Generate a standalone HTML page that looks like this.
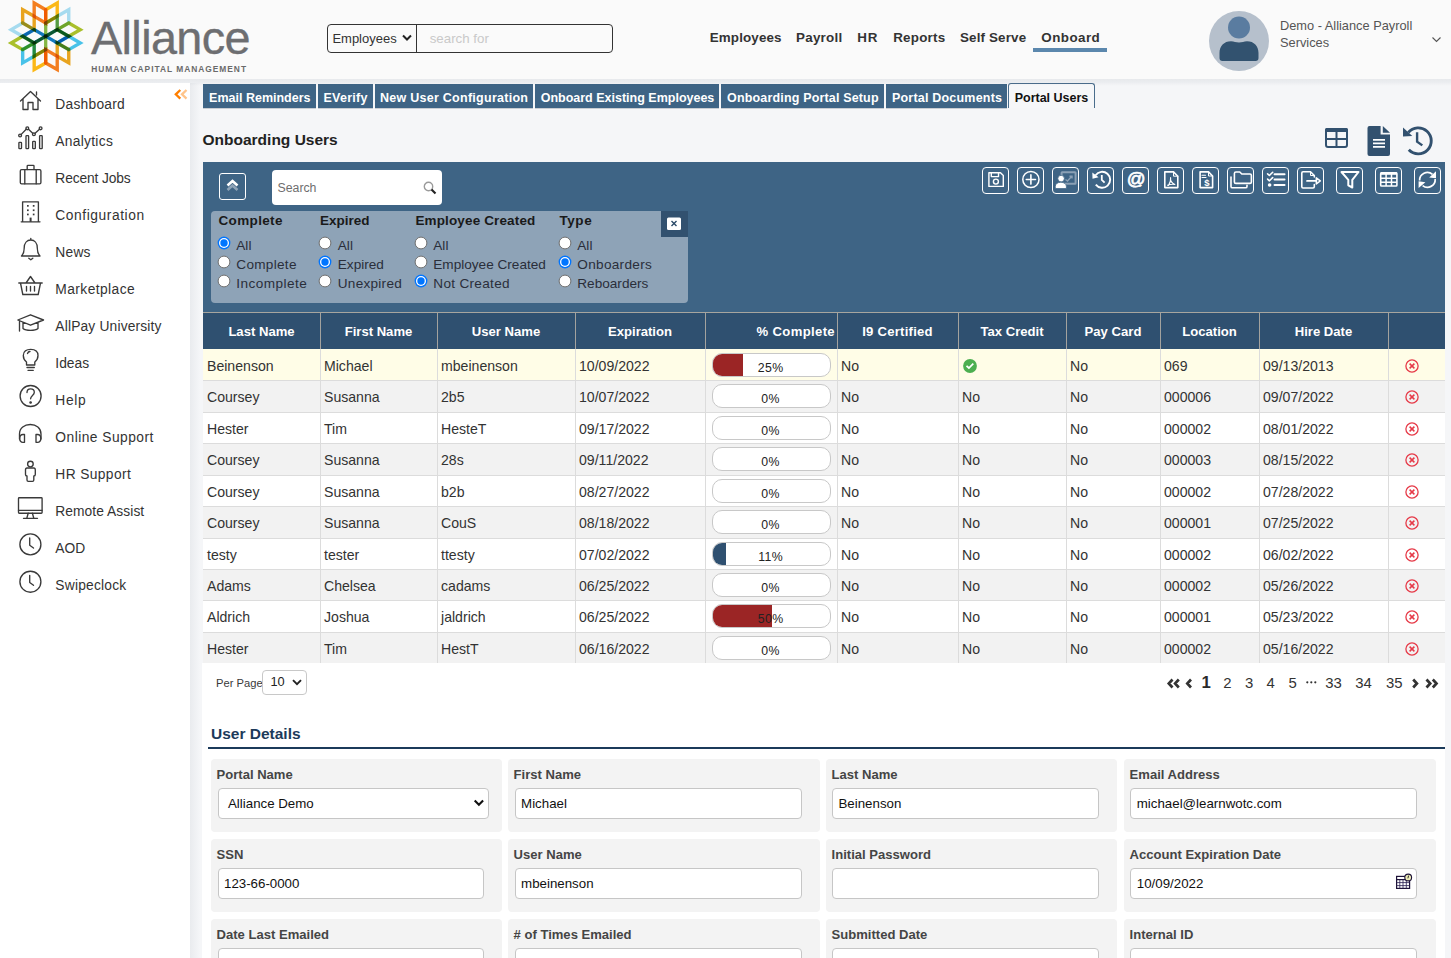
<!DOCTYPE html>
<html><head><meta charset="utf-8"><title>Portal Users</title>
<style>
html,body{margin:0;padding:0;}
body{width:1451px;height:958px;overflow:hidden;position:relative;background:#f5f6f8;font-family:"Liberation Sans", sans-serif;}
.t{position:absolute;line-height:1;white-space:nowrap;}
.r{position:absolute;box-sizing:border-box;}
svg{position:absolute;overflow:visible;}
</style></head><body>
<div class="r" style="left:0px;top:0px;width:1451px;height:79px;background:#fafafa;"></div>
<svg style="left:0;top:0;isolation:isolate" width="95" height="79" viewBox="0 0 95 79"><path d="M45.70 23.00 L45.70 9.70 L57.22 3.05 L57.22 16.35 Z" fill="none" stroke="#fbb817" stroke-width="3.4" stroke-linejoin="miter" stroke-miterlimit="3" style="mix-blend-mode:multiply"/><path d="M45.70 23.00 L45.70 9.70 L34.18 3.05 L34.18 16.35 Z" fill="none" stroke="#f37e20" stroke-width="3.4" stroke-linejoin="miter" stroke-miterlimit="3" style="mix-blend-mode:multiply"/><path d="M57.22 29.65 L68.74 23.00 L80.25 29.65 L68.74 36.30 Z" fill="none" stroke="#a9bf2b" stroke-width="3.4" stroke-linejoin="miter" stroke-miterlimit="3" style="mix-blend-mode:multiply"/><path d="M57.22 29.65 L68.74 23.00 L68.74 9.70 L57.22 16.35 Z" fill="none" stroke="#a6dbef" stroke-width="3.4" stroke-linejoin="miter" stroke-miterlimit="3" style="mix-blend-mode:multiply"/><path d="M57.22 42.95 L68.74 49.60 L68.74 62.90 L57.22 56.25 Z" fill="none" stroke="#e8a41f" stroke-width="3.4" stroke-linejoin="miter" stroke-miterlimit="3" style="mix-blend-mode:multiply"/><path d="M57.22 42.95 L68.74 49.60 L80.25 42.95 L68.74 36.30 Z" fill="none" stroke="#48c2e9" stroke-width="3.4" stroke-linejoin="miter" stroke-miterlimit="3" style="mix-blend-mode:multiply"/><path d="M45.70 49.60 L45.70 62.90 L34.18 69.55 L34.18 56.25 Z" fill="none" stroke="#fbb817" stroke-width="3.4" stroke-linejoin="miter" stroke-miterlimit="3" style="mix-blend-mode:multiply"/><path d="M45.70 49.60 L45.70 62.90 L57.22 69.55 L57.22 56.25 Z" fill="none" stroke="#f37e20" stroke-width="3.4" stroke-linejoin="miter" stroke-miterlimit="3" style="mix-blend-mode:multiply"/><path d="M34.18 42.95 L22.66 49.60 L11.15 42.95 L22.66 36.30 Z" fill="none" stroke="#a9bf2b" stroke-width="3.4" stroke-linejoin="miter" stroke-miterlimit="3" style="mix-blend-mode:multiply"/><path d="M34.18 42.95 L22.66 49.60 L22.66 62.90 L34.18 56.25 Z" fill="none" stroke="#48c2e9" stroke-width="3.4" stroke-linejoin="miter" stroke-miterlimit="3" style="mix-blend-mode:multiply"/><path d="M34.18 29.65 L22.66 23.00 L22.66 9.70 L34.18 16.35 Z" fill="none" stroke="#e8a41f" stroke-width="3.4" stroke-linejoin="miter" stroke-miterlimit="3" style="mix-blend-mode:multiply"/><path d="M34.18 29.65 L22.66 23.00 L11.15 29.65 L22.66 36.30 Z" fill="none" stroke="#a6dbef" stroke-width="3.4" stroke-linejoin="miter" stroke-miterlimit="3" style="mix-blend-mode:multiply"/><path d="M45.70 36.30 L45.70 23.00 L57.22 16.35 L57.22 29.65 Z" fill="none" stroke="#84b644" stroke-width="3.3" stroke-linejoin="miter" stroke-miterlimit="3" style="mix-blend-mode:multiply"/><path d="M45.70 36.30 L45.70 49.60 L34.18 56.25 L34.18 42.95 Z" fill="none" stroke="#84b644" stroke-width="3.3" stroke-linejoin="miter" stroke-miterlimit="3" style="mix-blend-mode:multiply"/><path d="M45.70 36.30 L57.22 29.65 L68.74 36.30 L57.22 42.95 Z" fill="none" stroke="#1279bd" stroke-width="3.3" stroke-linejoin="miter" stroke-miterlimit="3" style="mix-blend-mode:multiply"/><path d="M45.70 36.30 L34.18 42.95 L22.66 36.30 L34.18 29.65 Z" fill="none" stroke="#1279bd" stroke-width="3.3" stroke-linejoin="miter" stroke-miterlimit="3" style="mix-blend-mode:multiply"/></svg>
<div class="t" style="left:91.0px;top:14.6px;font-size:46.8px;color:#6d6e71;font-weight:normal;letter-spacing:-0.62px;-webkit-text-stroke:0.35px #6d6e71;">Alliance</div>
<div class="t" style="left:91.2px;top:65.2px;font-size:8.4px;color:#6a6a6a;font-weight:bold;letter-spacing:0.98px;">HUMAN CAPITAL MANAGEMENT</div>
<div class="r" style="left:327px;top:24px;width:286px;height:29px;border:1px solid #333;border-radius:4px;background:#fafafa;"></div>
<div class="r" style="left:416px;top:24px;width:1px;height:29px;background:#333;"></div>
<div class="t" style="left:332.4px;top:31.9px;font-size:13px;color:#333;font-weight:normal;">Employees</div>
<svg style="left:402px;top:34px" width="10" height="8" viewBox="0 0 10 8"><path d="M1 1.5 L5 5.5 L9 1.5" fill="none" stroke="#222" stroke-width="2"/></svg>
<div class="t" style="left:429.7px;top:31.6px;font-size:13.3px;color:#c9c9c9;font-weight:normal;">search for</div>
<div class="t" style="left:709.8px;top:31.4px;font-size:13.4px;color:#333;font-weight:bold;letter-spacing:0.12px;">Employees</div>
<div class="t" style="left:796.0px;top:31.4px;font-size:13.4px;color:#333;font-weight:bold;letter-spacing:0.25px;">Payroll</div>
<div class="t" style="left:857.2px;top:31.4px;font-size:13.4px;color:#333;font-weight:bold;letter-spacing:1.0px;">HR</div>
<div class="t" style="left:893.2px;top:31.4px;font-size:13.4px;color:#333;font-weight:bold;letter-spacing:0.23px;">Reports</div>
<div class="t" style="left:960.0px;top:31.4px;font-size:13.4px;color:#333;font-weight:bold;letter-spacing:0.15px;">Self Serve</div>
<div class="t" style="left:1041.3px;top:31.4px;font-size:13.4px;color:#333;font-weight:bold;letter-spacing:0.45px;">Onboard</div>
<div class="r" style="left:1033px;top:48px;width:74px;height:4px;background:#5b87ad;"></div>
<svg style="left:1209px;top:11px" width="60" height="60" viewBox="0 0 60 60">
<circle cx="30" cy="30" r="30" fill="#b6c0cc"/>
<circle cx="30" cy="16.5" r="11" fill="#5a7ca0"/>
<path d="M10.5 50 L10.5 42 C10.5 35 15 30.2 22 30.2 C25 30.2 27 31.5 30 31.5 C33 31.5 35 30.2 38 30.2 C45 30.2 49.5 35 49.5 42 L49.5 47 Q49.5 50 46.5 50 L13.5 50 Q10.5 50 10.5 47 Z" fill="#32526f"/>
</svg>
<div class="t" style="left:1280.0px;top:20.2px;font-size:12.8px;color:#555;font-weight:normal;">Demo - Alliance Payroll</div>
<div class="t" style="left:1280.0px;top:37.0px;font-size:12.8px;color:#555;font-weight:normal;">Services</div>
<svg style="left:1432px;top:37px" width="9" height="5" viewBox="0 0 9 5"><path d="M0.5 0.5 L4.5 4.5 L8.5 0.5" fill="none" stroke="#555" stroke-width="1.1"/></svg>
<div class="r" style="left:0px;top:83px;width:190px;height:875px;background:#fff;"></div>
<div class="r" style="left:190px;top:79px;width:10px;height:879px;background:linear-gradient(90deg,#e9ebee,#f5f6f8);"></div>
<svg style="left:174px;top:89px" width="15" height="11" viewBox="0 0 15 11"><path d="M6.3 1 L1.8 5.3 L6.3 9.6" fill="none" stroke="#ff7f00" stroke-width="2.3"/><path d="M12.5 1 L8 5.3 L12.5 9.6" fill="none" stroke="#ffc48a" stroke-width="2.3"/></svg>
<div class="t" style="left:55.3px;top:98.1px;font-size:13.8px;color:#333;font-weight:normal;letter-spacing:0.250px;">Dashboard</div>
<div class="t" style="left:55.3px;top:135.1px;font-size:13.8px;color:#333;font-weight:normal;letter-spacing:0.287px;">Analytics</div>
<div class="t" style="left:55.3px;top:172.1px;font-size:13.8px;color:#333;font-weight:normal;letter-spacing:-0.130px;">Recent Jobs</div>
<div class="t" style="left:55.3px;top:209.1px;font-size:13.8px;color:#333;font-weight:normal;letter-spacing:0.558px;">Configuration</div>
<div class="t" style="left:55.3px;top:246.1px;font-size:13.8px;color:#333;font-weight:normal;letter-spacing:0.233px;">News</div>
<div class="t" style="left:55.3px;top:283.1px;font-size:13.8px;color:#333;font-weight:normal;letter-spacing:0.420px;">Marketplace</div>
<div class="t" style="left:55.3px;top:320.1px;font-size:13.8px;color:#333;font-weight:normal;letter-spacing:0.169px;">AllPay University</div>
<div class="t" style="left:55.3px;top:357.1px;font-size:13.8px;color:#333;font-weight:normal;letter-spacing:0.025px;">Ideas</div>
<div class="t" style="left:55.3px;top:394.1px;font-size:13.8px;color:#333;font-weight:normal;letter-spacing:0.700px;">Help</div>
<div class="t" style="left:55.3px;top:431.1px;font-size:13.8px;color:#333;font-weight:normal;letter-spacing:0.462px;">Online Support</div>
<div class="t" style="left:55.3px;top:468.1px;font-size:13.8px;color:#333;font-weight:normal;letter-spacing:0.378px;">HR Support</div>
<div class="t" style="left:55.3px;top:505.1px;font-size:13.8px;color:#333;font-weight:normal;letter-spacing:0.058px;">Remote Assist</div>
<div class="t" style="left:55.3px;top:542.1px;font-size:13.8px;color:#333;font-weight:normal;letter-spacing:0.050px;">AOD</div>
<div class="t" style="left:55.3px;top:579.1px;font-size:13.8px;color:#333;font-weight:normal;letter-spacing:0.211px;">Swipeclock</div>
<svg style="left:0;top:0" width="50" height="600" viewBox="0 0 50 600">
<g fill="none" stroke="#3a3a3a" stroke-width="1.35" stroke-linecap="round" stroke-linejoin="round">
<!-- house -->
<path d="M20.5 101 L30.5 91.5 L40.5 101 M23 99 L23 109.5 L28 109.5 L28 102.5 L33 102.5 L33 109.5 L38 109.5 L38 99 M36.5 95 L36.5 92"/>
<!-- analytics -->
<path d="M21 134.6 L26.2 129.2 M28.5 129.2 L32.7 133.3 M35.1 133.3 L39.5 129.2"/>
<circle cx="20.1" cy="135.5" r="1.4"/><circle cx="27.3" cy="128.3" r="1.4"/><circle cx="33.9" cy="134.2" r="1.4"/><circle cx="40.6" cy="128.3" r="1.4"/>
<rect x="18.9" y="142.3" width="2.6" height="6.3" rx="0.6"/><rect x="26" y="135.6" width="2.6" height="13" rx="0.6"/><rect x="32.7" y="141.3" width="2.6" height="7.3" rx="0.6"/><rect x="39.6" y="135.6" width="2.6" height="13" rx="0.6"/>
<!-- briefcase -->
<rect x="20.3" y="169.6" width="20.6" height="14.2" rx="1.3"/>
<path d="M27.2 169.6 L27.2 166 Q27.2 165.3 28 165.3 L33.3 165.3 Q34 165.3 34 166 L34 169.6 M24.8 169.6 L24.8 183.8 M36.2 169.6 L36.2 183.8"/>
<!-- building -->
<path d="M22.6 221.8 L22.6 201.8 L38.4 201.8 L38.4 221.8 M21.2 221.8 L40 221.8"/>
<g fill="#3a3a3a" stroke="none"><rect x="27" y="205" width="1.7" height="1.7"/><rect x="32.8" y="205" width="1.7" height="1.7"/><rect x="27" y="209.4" width="1.7" height="1.7"/><rect x="32.8" y="209.4" width="1.7" height="1.7"/><rect x="27" y="213.6" width="1.7" height="1.7"/><rect x="32.8" y="213.6" width="1.7" height="1.7"/><rect x="29.6" y="217.6" width="2" height="4.2"/></g>
<!-- bell -->
<path d="M21.5 256 L40 256 C38 254 37.3 252 37.3 248 C37.3 243 34.5 240 30.8 240 C27 240 24.2 243 24.2 248 C24.2 252 23.5 254 21.5 256 Z M30.8 238.3 L30.8 240 M28.8 258.2 L30.8 259.8 L32.8 258.2"/>
<!-- basket -->
<path d="M18.8 283 L42.2 283 M20.5 283 L22.8 294.5 L38.2 294.5 L40.5 283 M26 283 L30.5 276.5 L35 283 M26.5 286.5 L26.5 291 M30.5 286.5 L30.5 291 M34.5 286.5 L34.5 291"/>
<!-- cap -->
<path d="M17.8 320 L30.5 314.8 L43.5 320 L30.5 325.2 Z M23 322.5 L23 328.5 C26 331 35 331 38 328.5 L38 322.5 M19.5 321 L19.5 331"/>
<!-- bulb -->
<path d="M26.5 365 L26.5 362 C24 360 23.3 357.5 23.3 355.5 C23.3 351.5 26.5 349.3 30.7 349.3 C34.9 349.3 38 351.5 38 355.5 C38 357.5 37.3 360 34.8 362 L34.8 365 Z M27 367.5 L34.3 367.5 M28 370.3 L33.3 370.3 M27.5 353.5 C28 352 29 351.5 30 351.5"/>
<!-- help -->
<circle cx="30.6" cy="396" r="10.5"/>
<path d="M27 392.5 C27 390 28.7 388.8 30.6 388.8 C32.7 388.8 34.3 390.2 34.3 392.2 C34.3 395.5 30.6 395.3 30.6 398.8"/>
<circle cx="30.6" cy="402.5" r="0.7" fill="#3a3a3a"/>
<!-- headphones -->
<path d="M19.5 439 L19.5 434 C19.5 428 24.5 424.5 30.3 424.5 C36.2 424.5 41 428 41 434 L41 439"/>
<path d="M24.5 434.5 L24.5 442.3 L23 442.3 C21 442.3 19.7 441 19.7 438.5 C19.7 436 21 434.5 23 434.5 Z M36 434.5 L36 442.3 L37.5 442.3 C39.5 442.3 40.8 441 40.8 438.5 C40.8 436 39.5 434.5 37.5 434.5 Z"/>
<!-- HR person -->
<circle cx="30.4" cy="464" r="2.8"/>
<path d="M27 468 C25.5 468 25.5 469 25.5 470 L25.5 474.5 C25.5 475.5 26 476 27 476 L27 480 C27 481 27.5 481.3 28.3 481.3 L32.5 481.3 C33.3 481.3 33.8 481 33.8 480 L33.8 476 C34.8 476 35.3 475.5 35.3 474.5 L35.3 470 C35.3 469 35.3 468 33.8 468 Z"/>
<!-- monitor -->
<rect x="18.5" y="497.7" width="23.6" height="15.5" rx="0.8"/>
<path d="M18.5 510.3 L42.1 510.3 M28.2 513.2 L26.8 518.3 M32.4 513.2 L33.8 518.3 M23.5 518.3 L37.5 518.3"/>
<!-- clocks -->
<circle cx="30.4" cy="544.4" r="10.5"/>
<path d="M29.7 538 L29.7 545.2 L33.5 548"/>
<circle cx="30.4" cy="581.7" r="10.5"/>
<path d="M29.7 575.3 L29.7 582.5 L33.5 585.3"/>
</g></svg>
<div class="r" style="left:203px;top:84px;width:113px;height:24px;background:#3e6485;box-shadow:0 1px 0 #c9cdd2;"></div>
<div class="t" style="left:-40.2px;width:600px;text-align:center;top:92.4px;font-size:12.5px;color:#fff;font-weight:bold;letter-spacing:0px;">Email Reminders</div>
<div class="r" style="left:318px;top:84px;width:55px;height:24px;background:#3e6485;box-shadow:0 1px 0 #c9cdd2;"></div>
<div class="t" style="left:45.6px;width:600px;text-align:center;top:92.4px;font-size:12.5px;color:#fff;font-weight:bold;letter-spacing:0.28px;">EVerify</div>
<div class="r" style="left:375px;top:84px;width:158px;height:24px;background:#3e6485;box-shadow:0 1px 0 #c9cdd2;"></div>
<div class="t" style="left:154.1px;width:600px;text-align:center;top:92.4px;font-size:12.5px;color:#fff;font-weight:bold;letter-spacing:0.27px;">New User Configuration</div>
<div class="r" style="left:535px;top:84px;width:184px;height:24px;background:#3e6485;box-shadow:0 1px 0 #c9cdd2;"></div>
<div class="t" style="left:327.5px;width:600px;text-align:center;top:92.4px;font-size:12.5px;color:#fff;font-weight:bold;letter-spacing:0px;">Onboard Existing Employees</div>
<div class="r" style="left:721px;top:84px;width:163px;height:24px;background:#3e6485;box-shadow:0 1px 0 #c9cdd2;"></div>
<div class="t" style="left:502.9px;width:600px;text-align:center;top:92.4px;font-size:12.5px;color:#fff;font-weight:bold;letter-spacing:0.16px;">Onboarding Portal Setup</div>
<div class="r" style="left:886px;top:84px;width:121px;height:24px;background:#3e6485;box-shadow:0 1px 0 #c9cdd2;"></div>
<div class="t" style="left:647.1px;width:600px;text-align:center;top:92.4px;font-size:12.5px;color:#fff;font-weight:bold;letter-spacing:0.2px;">Portal Documents</div>
<div class="r" style="left:1008px;top:83px;width:87px;height:25px;background:#f6f7f9;border:1px solid #4a6d8c;border-bottom:none;border-radius:3px 3px 0 0;"></div>
<div class="t" style="left:751.5px;width:600px;text-align:center;top:92.4px;font-size:12.5px;color:#111;font-weight:bold;">Portal Users</div>
<div class="t" style="left:202.5px;top:132.2px;font-size:15.5px;color:#222;font-weight:bold;">Onboarding Users</div>
<svg style="left:1320px;top:120px" width="120" height="40" viewBox="1320 120 120 40">
<rect x="1326" y="129" width="21" height="18" rx="2" fill="none" stroke="#32516f" stroke-width="2"/>
<rect x="1325" y="128" width="23" height="4" rx="1.5" fill="#32516f"/>
<path d="M1336.5 130 L1336.5 147 M1326 139 L1347 139" stroke="#32516f" stroke-width="2"/>
<path d="M1367.5 128 Q1367.5 126 1369.5 126 L1380.6 126 L1380.6 134.6 L1390 134.6 L1390 154 Q1390 156 1388 156 L1369.5 156 Q1367.5 156 1367.5 154 Z" fill="#32516f"/>
<path d="M1382.8 126 L1390 132.7 L1382.8 132.7 Z" fill="#32516f"/>
<path d="M1373 139.8 H1385 M1373 143.3 H1385 M1373 146.8 H1385" stroke="#fff" stroke-width="1.7"/>
<path d="M1408.3 132.5 A13 13 0 1 1 1408.8 149.8" fill="none" stroke="#32516f" stroke-width="2.9"/>
<path d="M1403 127.6 L1412.3 135.9 L1403 136.4 Z" fill="#32516f"/>
<path d="M1417.1 132.2 L1417.1 141.6 L1422.3 145.4" fill="none" stroke="#32516f" stroke-width="2.4"/>
</svg>
<div class="r" style="left:203px;top:162px;width:1242px;height:150px;background:#3e6485;"></div>
<div class="r" style="left:219px;top:173px;width:27px;height:27px;border:1px solid #fff;border-radius:3px;"></div>
<svg style="left:224px;top:178px" width="17" height="17" viewBox="0 0 17 17"><path d="M3.5 12 L8.5 7.5 L13.5 12" fill="none" stroke="#8ea3b7" stroke-width="2.6"/><path d="M3.5 7.5 L8.5 3 L13.5 7.5" fill="none" stroke="#fff" stroke-width="2.6"/></svg>
<div class="r" style="left:272px;top:170px;width:170px;height:35px;background:#fff;border-radius:4px;"></div>
<div class="t" style="left:277.5px;top:181.6px;font-size:12.3px;color:#6e6e6e;font-weight:normal;">Search</div>
<svg style="left:423px;top:181px" width="14" height="14" viewBox="0 0 14 14"><circle cx="5.5" cy="5.5" r="4.2" fill="none" stroke="#9a9a9a" stroke-width="1.4"/><path d="M8.5 8.5 L12.5 12.5" stroke="#222" stroke-width="2.2"/></svg>
<div class="r" style="left:211px;top:211px;width:477px;height:92px;background:#8ea3b7;border-radius:4px;"></div>
<div class="r" style="left:661px;top:211px;width:27px;height:26px;background:#32516f;"></div>
<svg style="left:668px;top:218px" width="12" height="12" viewBox="0 0 12 12"><rect x="-1" y="-0.5" width="14" height="12.5" rx="1.5" fill="#fff"/><path d="M3.5 3 L8.5 8 M8.5 3 L3.5 8" stroke="#2b4a68" stroke-width="1.4"/></svg>
<div class="t" style="left:218.5px;top:214.3px;font-size:13.5px;color:#1a1a1a;font-weight:bold;letter-spacing:0.35px;">Complete</div>
<svg style="left:217.4px;top:236.2px" width="14" height="14" viewBox="0 0 14 14"><circle cx="7" cy="7" r="6.4" fill="#0075ff"/><circle cx="7" cy="7" r="5" fill="#fff"/><circle cx="7" cy="7" r="3.7" fill="#0075ff"/></svg>
<div class="t" style="left:236.3px;top:238.7px;font-size:13.6px;color:#2a2e3a;font-weight:normal;letter-spacing:0px;">All</div>
<svg style="left:217.4px;top:255.3px" width="14" height="14" viewBox="0 0 14 14"><circle cx="7" cy="7" r="5.9" fill="#fff" stroke="#6f6f6f" stroke-width="1"/></svg>
<div class="t" style="left:236.3px;top:257.8px;font-size:13.6px;color:#2a2e3a;font-weight:normal;letter-spacing:0.28px;">Complete</div>
<svg style="left:217.4px;top:274.4px" width="14" height="14" viewBox="0 0 14 14"><circle cx="7" cy="7" r="5.9" fill="#fff" stroke="#6f6f6f" stroke-width="1"/></svg>
<div class="t" style="left:236.3px;top:276.9px;font-size:13.6px;color:#2a2e3a;font-weight:normal;letter-spacing:0.45px;">Incomplete</div>
<div class="t" style="left:320.0px;top:214.3px;font-size:13.5px;color:#1a1a1a;font-weight:bold;letter-spacing:0px;">Expired</div>
<svg style="left:318.0px;top:236.2px" width="14" height="14" viewBox="0 0 14 14"><circle cx="7" cy="7" r="5.9" fill="#fff" stroke="#6f6f6f" stroke-width="1"/></svg>
<div class="t" style="left:337.8px;top:238.7px;font-size:13.6px;color:#2a2e3a;font-weight:normal;letter-spacing:0px;">All</div>
<svg style="left:318.0px;top:255.3px" width="14" height="14" viewBox="0 0 14 14"><circle cx="7" cy="7" r="6.4" fill="#0075ff"/><circle cx="7" cy="7" r="5" fill="#fff"/><circle cx="7" cy="7" r="3.7" fill="#0075ff"/></svg>
<div class="t" style="left:337.8px;top:257.8px;font-size:13.6px;color:#2a2e3a;font-weight:normal;letter-spacing:0px;">Expired</div>
<svg style="left:318.0px;top:274.4px" width="14" height="14" viewBox="0 0 14 14"><circle cx="7" cy="7" r="5.9" fill="#fff" stroke="#6f6f6f" stroke-width="1"/></svg>
<div class="t" style="left:337.8px;top:276.9px;font-size:13.6px;color:#2a2e3a;font-weight:normal;letter-spacing:0.25px;">Unexpired</div>
<div class="t" style="left:415.4px;top:214.3px;font-size:13.5px;color:#1a1a1a;font-weight:bold;letter-spacing:0.14px;">Employee Created</div>
<svg style="left:414.0px;top:236.2px" width="14" height="14" viewBox="0 0 14 14"><circle cx="7" cy="7" r="5.9" fill="#fff" stroke="#6f6f6f" stroke-width="1"/></svg>
<div class="t" style="left:433.3px;top:238.7px;font-size:13.6px;color:#2a2e3a;font-weight:normal;letter-spacing:0px;">All</div>
<svg style="left:414.0px;top:255.3px" width="14" height="14" viewBox="0 0 14 14"><circle cx="7" cy="7" r="5.9" fill="#fff" stroke="#6f6f6f" stroke-width="1"/></svg>
<div class="t" style="left:433.3px;top:257.8px;font-size:13.6px;color:#2a2e3a;font-weight:normal;letter-spacing:0px;">Employee Created</div>
<svg style="left:414.0px;top:274.4px" width="14" height="14" viewBox="0 0 14 14"><circle cx="7" cy="7" r="6.4" fill="#0075ff"/><circle cx="7" cy="7" r="5" fill="#fff"/><circle cx="7" cy="7" r="3.7" fill="#0075ff"/></svg>
<div class="t" style="left:433.3px;top:276.9px;font-size:13.6px;color:#2a2e3a;font-weight:normal;letter-spacing:0.3px;">Not Created</div>
<div class="t" style="left:559.4px;top:214.3px;font-size:13.5px;color:#1a1a1a;font-weight:bold;letter-spacing:0.6px;">Type</div>
<svg style="left:558.0px;top:236.2px" width="14" height="14" viewBox="0 0 14 14"><circle cx="7" cy="7" r="5.9" fill="#fff" stroke="#6f6f6f" stroke-width="1"/></svg>
<div class="t" style="left:577.3px;top:238.7px;font-size:13.6px;color:#2a2e3a;font-weight:normal;letter-spacing:0px;">All</div>
<svg style="left:558.0px;top:255.3px" width="14" height="14" viewBox="0 0 14 14"><circle cx="7" cy="7" r="6.4" fill="#0075ff"/><circle cx="7" cy="7" r="5" fill="#fff"/><circle cx="7" cy="7" r="3.7" fill="#0075ff"/></svg>
<div class="t" style="left:577.3px;top:257.8px;font-size:13.6px;color:#2a2e3a;font-weight:normal;letter-spacing:0.3px;">Onboarders</div>
<svg style="left:558.0px;top:274.4px" width="14" height="14" viewBox="0 0 14 14"><circle cx="7" cy="7" r="5.9" fill="#fff" stroke="#6f6f6f" stroke-width="1"/></svg>
<div class="t" style="left:577.3px;top:276.9px;font-size:13.6px;color:#2a2e3a;font-weight:normal;letter-spacing:0px;">Reboarders</div>
<div class="r" style="left:982px;top:167px;width:27px;height:27px;border:1.2px solid #fff;border-radius:4px;"></div>
<div class="r" style="left:1017px;top:167px;width:27px;height:27px;border:1.2px solid #fff;border-radius:4px;"></div>
<div class="r" style="left:1052px;top:167px;width:27px;height:27px;border:1.2px solid #fff;border-radius:4px;"></div>
<div class="r" style="left:1087px;top:167px;width:27px;height:27px;border:1.2px solid #fff;border-radius:4px;"></div>
<div class="r" style="left:1122px;top:167px;width:27px;height:27px;border:1.2px solid #fff;border-radius:4px;"></div>
<div class="r" style="left:1157px;top:167px;width:27px;height:27px;border:1.2px solid #fff;border-radius:4px;"></div>
<div class="r" style="left:1192px;top:167px;width:27px;height:27px;border:1.2px solid #fff;border-radius:4px;"></div>
<div class="r" style="left:1227px;top:167px;width:27px;height:27px;border:1.2px solid #fff;border-radius:4px;"></div>
<div class="r" style="left:1262px;top:167px;width:27px;height:27px;border:1.2px solid #fff;border-radius:4px;"></div>
<div class="r" style="left:1297px;top:167px;width:27px;height:27px;border:1.2px solid #fff;border-radius:4px;"></div>
<div class="r" style="left:1336px;top:167px;width:27px;height:27px;border:1.2px solid #fff;border-radius:4px;"></div>
<div class="r" style="left:1375px;top:167px;width:27px;height:27px;border:1.2px solid #fff;border-radius:4px;"></div>
<div class="r" style="left:1414px;top:167px;width:27px;height:27px;border:1.2px solid #fff;border-radius:4px;"></div>
<svg style="left:982px;top:167px" width="27" height="27" viewBox="0 0 27 27"><g fill="none" stroke="#fff" stroke-width="1.5" stroke-linejoin="round" stroke-linecap="round"><path d="M6.9 5.7 L18.5 5.7 L21.3 8.5 L21.3 19.4 L6.9 19.4 Z" stroke-width="1.4"/><path d="M9.3 5.7 L9.3 9.6 L16.5 9.6 L16.5 5.7" stroke-width="1.4"/><circle cx="13.9" cy="14.6" r="2.5" stroke-width="1.4"/></g></svg>
<svg style="left:1017px;top:167px" width="27" height="27" viewBox="0 0 27 27"><g fill="none" stroke="#fff" stroke-width="1.5" stroke-linejoin="round" stroke-linecap="round"><circle cx="13.9" cy="12.5" r="8.1" stroke-width="1.5"/><path d="M13.9 7.9 V17.1 M9.3 12.5 H18.5" stroke-width="1.6"/></g></svg>
<svg style="left:1052px;top:167px" width="27" height="27" viewBox="0 0 27 27"><rect x="9.6" y="5.3" width="14" height="11.5" rx="0.5" fill="none" stroke="#8ba0b5" stroke-width="2"/><path d="M13.5 12.5 L15.5 14 L19.5 9.5 M17.5 9.3 L20 9.3 L20 11.5" fill="none" stroke="#8ba0b5" stroke-width="1.4"/><circle cx="9.1" cy="11.6" r="3.3" fill="#fff" stroke="#3e6485" stroke-width="0.8"/><path d="M3.3 21.6 L3.3 19.5 C3.3 17 5.3 15.3 8.8 15.3 C12.3 15.3 14.4 17 14.4 19.5 L14.4 21.6 Z" fill="#fff" stroke="#3e6485" stroke-width="0.8"/></svg>
<svg style="left:1087px;top:167px" width="27" height="27" viewBox="0 0 27 27"><path d="M8.6 8.2 A8 8 0 1 1 8.8 17.6" fill="none" stroke="#fff" stroke-width="1.9"/><path d="M5.3 5.5 L11.6 10.2 L5.5 11.8 Z" fill="#fff"/><path d="M14.8 8 L14.8 12.8 L17.6 15.6" fill="none" stroke="#fff" stroke-width="1.8"/></svg>
<svg style="left:1122px;top:167px" width="27" height="27" viewBox="0 0 27 27"><text x="14.1" y="18.2" text-anchor="middle" font-family="Liberation Sans" font-size="18.5" font-weight="normal" fill="#fff" stroke="#fff" stroke-width="0.7">@</text></svg>
<svg style="left:1157px;top:167px" width="27" height="27" viewBox="0 0 27 27"><g fill="none" stroke="#fff" stroke-width="1.5" stroke-linejoin="round" stroke-linecap="round"><path d="M7.8 4.9 L16.5 4.9 L20.8 9.2 L20.8 20.6 L7.8 20.6 Z" stroke-width="1.6"/><path d="M16.5 4.9 L16.5 9.2 L20.8 9.2" stroke-width="1"/><path d="M11.5 18.5 C13 16 14 13.5 13.6 10.5 C13.2 13.5 14.5 16 17.8 17.5 C15 17 12.5 17.5 10.5 18.3" stroke-width="1.1"/></g></svg>
<svg style="left:1192px;top:167px" width="27" height="27" viewBox="0 0 27 27"><g fill="none" stroke="#fff" stroke-width="1.5" stroke-linejoin="round" stroke-linecap="round"><path d="M8.1 4.9 L16.5 4.9 L20.6 9 L20.6 20.6 L8.1 20.6 Z" stroke-width="1.6"/><path d="M16.5 4.9 L16.5 9 L20.6 9" stroke-width="1"/><path d="M10 8.3 H13.5 M10 10.5 H14" stroke-width="1.1"/></g><text x="14.8" y="19.4" text-anchor="middle" font-family="Liberation Sans" font-size="9.5" font-weight="bold" fill="#fff">$</text></svg>
<svg style="left:1227px;top:167px" width="27" height="27" viewBox="0 0 27 27"><g fill="none" stroke="#fff" stroke-width="1.5" stroke-linejoin="round" stroke-linecap="round"><path d="M4 10 L4 19.4 Q4 20.8 5.4 20.8 L18.5 20.8 Q20 20.8 20 19.4 L20 18.2" stroke-width="1.6"/><path d="M7.4 6.5 Q7.4 5 8.9 5 L12.8 5 L14.8 7 L23 7 Q24.4 7 24.4 8.4 L24.4 15 Q24.4 16.4 23 16.4 L8.9 16.4 Q7.4 16.4 7.4 15 Z" stroke-width="1.6"/></g></svg>
<svg style="left:1262px;top:167px" width="27" height="27" viewBox="0 0 27 27"><g fill="none" stroke="#fff" stroke-width="1.5" stroke-linejoin="round" stroke-linecap="round"><path d="M5.6 6.8 L7.4 8.5 L10.7 5.3 M5.6 12.1 L7.4 13.8 L10.7 10.6" stroke-width="1.6"/><path d="M12.5 7.2 H22.6 M12.5 12.5 H22.6 M12.5 18 H22.6" stroke-width="1.9"/></g><circle cx="7.6" cy="18" r="1.8" fill="#fff"/></svg>
<svg style="left:1297px;top:167px" width="27" height="27" viewBox="0 0 27 27"><g fill="none" stroke="#fff" stroke-width="1.5" stroke-linejoin="round" stroke-linecap="round"><path d="M17.3 10 L17.3 8.5 L13.5 4.8 L6 4.8 Q4.8 4.8 4.8 6 L4.8 19.8 Q4.8 21 6 21 L16 21 Q17.3 21 17.3 19.8 L17.3 17.5" stroke-width="1.6"/><path d="M13.5 4.8 L13.5 8.5 L17.3 8.5" stroke-width="1"/><path d="M10 13.9 H19.5" stroke-width="1.7"/><path d="M19.3 10.8 L23.3 13.9 L19.3 17 Z" stroke-width="1.5"/></g></svg>
<svg style="left:1336px;top:167px" width="27" height="27" viewBox="0 0 27 27"><path d="M5.5 5 L22.5 5 L16.3 12.8 L16.3 20.5 L12.3 18.3 L12.3 12.8 Z" fill="none" stroke="#fff" stroke-width="2" stroke-linejoin="round"/></svg>
<svg style="left:1375px;top:167px" width="27" height="27" viewBox="0 0 27 27"><g fill="none" stroke="#fff"><rect x="5.7" y="5.9" width="16.2" height="13.1" rx="0.8" stroke-width="1.6"/><path d="M5.7 6.5 H21.9" stroke-width="2.6"/><path d="M5.7 11.3 H21.9 M5.7 15.2 H21.9 M11.1 7 V19 M16.5 7 V19" stroke-width="1.5"/></g></svg>
<svg style="left:1414px;top:167px" width="27" height="27" viewBox="0 0 27 27"><g fill="none" stroke="#fff" stroke-width="1.7"><path d="M5.6 13.5 A7.8 7.8 0 0 1 18.5 7.3"/><path d="M21.2 12 A7.8 7.8 0 0 1 8.6 18.6"/></g><path d="M22 4.3 L22 11.2 L15.2 10.6 Z M4.6 21 L4.6 14.3 L11.4 15.2 Z" fill="#fff"/></svg>
<div class="r" style="left:203px;top:312px;width:1242px;height:37px;background:#2f5070;border-top:1px solid #a7a59f;"></div>
<div class="t" style="left:-38.5px;width:600px;text-align:center;top:324.9px;font-size:13.1px;color:#fff;font-weight:bold;letter-spacing:0px;">Last Name</div>
<div class="r" style="left:320px;top:313px;width:1px;height:36px;background:#a3a29e;"></div>
<div class="t" style="left:78.5px;width:600px;text-align:center;top:324.9px;font-size:13.1px;color:#fff;font-weight:bold;letter-spacing:0px;">First Name</div>
<div class="r" style="left:437px;top:313px;width:1px;height:36px;background:#a3a29e;"></div>
<div class="t" style="left:206.0px;width:600px;text-align:center;top:324.9px;font-size:13.1px;color:#fff;font-weight:bold;letter-spacing:0px;">User Name</div>
<div class="r" style="left:575px;top:313px;width:1px;height:36px;background:#a3a29e;"></div>
<div class="t" style="left:340.0px;width:600px;text-align:center;top:324.9px;font-size:13.1px;color:#fff;font-weight:bold;letter-spacing:0px;">Expiration</div>
<div class="r" style="left:705px;top:313px;width:1px;height:36px;background:#a3a29e;"></div>
<div class="t" style="left:705px;width:130px;text-align:right;top:324.9px;font-size:13.1px;color:#fff;font-weight:bold;letter-spacing:0.35px">% Complete</div>
<div class="r" style="left:837px;top:313px;width:1px;height:36px;background:#a3a29e;"></div>
<div class="t" style="left:597.5px;width:600px;text-align:center;top:324.9px;font-size:13.1px;color:#fff;font-weight:bold;letter-spacing:0.25px;">I9 Certified</div>
<div class="r" style="left:958px;top:313px;width:1px;height:36px;background:#a3a29e;"></div>
<div class="t" style="left:712.0px;width:600px;text-align:center;top:324.9px;font-size:13.1px;color:#fff;font-weight:bold;letter-spacing:0px;">Tax Credit</div>
<div class="r" style="left:1066px;top:313px;width:1px;height:36px;background:#a3a29e;"></div>
<div class="t" style="left:813.0px;width:600px;text-align:center;top:324.9px;font-size:13.1px;color:#fff;font-weight:bold;letter-spacing:0px;">Pay Card</div>
<div class="r" style="left:1160px;top:313px;width:1px;height:36px;background:#a3a29e;"></div>
<div class="t" style="left:909.5px;width:600px;text-align:center;top:324.9px;font-size:13.1px;color:#fff;font-weight:bold;letter-spacing:0px;">Location</div>
<div class="r" style="left:1259px;top:313px;width:1px;height:36px;background:#a3a29e;"></div>
<div class="t" style="left:1023.5px;width:600px;text-align:center;top:324.9px;font-size:13.1px;color:#fff;font-weight:bold;letter-spacing:0px;">Hire Date</div>
<div class="r" style="left:1388px;top:313px;width:1px;height:36px;background:#a3a29e;"></div>
<div class="r" style="left:203px;top:349px;width:1242px;height:32px;background:#fffde7;border-bottom:1px solid #dcdcdc;"></div>
<div class="r" style="left:320px;top:349px;width:1px;height:31px;background:#dcdcdc;"></div>
<div class="r" style="left:437px;top:349px;width:1px;height:31px;background:#dcdcdc;"></div>
<div class="r" style="left:575px;top:349px;width:1px;height:31px;background:#dcdcdc;"></div>
<div class="r" style="left:705px;top:349px;width:1px;height:31px;background:#dcdcdc;"></div>
<div class="r" style="left:837px;top:349px;width:1px;height:31px;background:#dcdcdc;"></div>
<div class="r" style="left:958px;top:349px;width:1px;height:31px;background:#dcdcdc;"></div>
<div class="r" style="left:1066px;top:349px;width:1px;height:31px;background:#dcdcdc;"></div>
<div class="r" style="left:1160px;top:349px;width:1px;height:31px;background:#dcdcdc;"></div>
<div class="r" style="left:1259px;top:349px;width:1px;height:31px;background:#dcdcdc;"></div>
<div class="r" style="left:1388px;top:349px;width:1px;height:31px;background:#dcdcdc;"></div>
<div class="t" style="left:207.0px;top:359.1px;font-size:14.1px;color:#333;font-weight:normal;">Beinenson</div>
<div class="t" style="left:324.0px;top:359.1px;font-size:14.1px;color:#333;font-weight:normal;">Michael</div>
<div class="t" style="left:441.0px;top:359.1px;font-size:14.1px;color:#333;font-weight:normal;">mbeinenson</div>
<div class="t" style="left:579.0px;top:359.1px;font-size:14.1px;color:#333;font-weight:normal;">10/09/2022</div>
<div class="r" style="left:712px;top:353px;width:119px;height:24px;border:1px solid #c8c8c8;border-radius:10px;background:#fff;overflow:hidden;"><div class="r" style="left:0;top:0;width:29.5px;height:100%;background:#9b2525;"></div></div>
<div class="t" style="left:470.6px;width:600px;text-align:center;top:362.1px;font-size:12.3px;color:#222;font-weight:normal;letter-spacing:0.4px;">25%</div>
<div class="t" style="left:841.0px;top:359.1px;font-size:14.1px;color:#333;font-weight:normal;">No</div>
<svg style="left:963px;top:358.7px" width="14" height="14" viewBox="0 0 14 14"><circle cx="7" cy="7" r="6.9" fill="#4caf50"/><path d="M3.5 6.8 L5.9 9 L10.3 4.6" fill="none" stroke="#fff" stroke-width="1.7"/></svg>
<div class="t" style="left:1070.0px;top:359.1px;font-size:14.1px;color:#333;font-weight:normal;">No</div>
<div class="t" style="left:1164.0px;top:359.1px;font-size:14.1px;color:#333;font-weight:normal;">069</div>
<div class="t" style="left:1263.0px;top:359.1px;font-size:14.1px;color:#333;font-weight:normal;">09/13/2013</div>
<svg style="left:1405.4px;top:358.5px" width="14" height="14" viewBox="0 0 14 14"><circle cx="7" cy="7" r="6.1" fill="none" stroke="#e63a48" stroke-width="1.3"/><path d="M4.6 4.6 L9.4 9.4 M9.4 4.6 L4.6 9.4" stroke="#e63a48" stroke-width="1.5"/></svg>
<div class="r" style="left:203px;top:381px;width:1242px;height:32px;background:#f2f2f2;border-bottom:1px solid #dcdcdc;"></div>
<div class="r" style="left:320px;top:381px;width:1px;height:31px;background:#dcdcdc;"></div>
<div class="r" style="left:437px;top:381px;width:1px;height:31px;background:#dcdcdc;"></div>
<div class="r" style="left:575px;top:381px;width:1px;height:31px;background:#dcdcdc;"></div>
<div class="r" style="left:705px;top:381px;width:1px;height:31px;background:#dcdcdc;"></div>
<div class="r" style="left:837px;top:381px;width:1px;height:31px;background:#dcdcdc;"></div>
<div class="r" style="left:958px;top:381px;width:1px;height:31px;background:#dcdcdc;"></div>
<div class="r" style="left:1066px;top:381px;width:1px;height:31px;background:#dcdcdc;"></div>
<div class="r" style="left:1160px;top:381px;width:1px;height:31px;background:#dcdcdc;"></div>
<div class="r" style="left:1259px;top:381px;width:1px;height:31px;background:#dcdcdc;"></div>
<div class="r" style="left:1388px;top:381px;width:1px;height:31px;background:#dcdcdc;"></div>
<div class="t" style="left:207.0px;top:390.1px;font-size:14.1px;color:#333;font-weight:normal;">Coursey</div>
<div class="t" style="left:324.0px;top:390.1px;font-size:14.1px;color:#333;font-weight:normal;">Susanna</div>
<div class="t" style="left:441.0px;top:390.1px;font-size:14.1px;color:#333;font-weight:normal;">2b5</div>
<div class="t" style="left:579.0px;top:390.1px;font-size:14.1px;color:#333;font-weight:normal;">10/07/2022</div>
<div class="r" style="left:712px;top:384px;width:119px;height:24px;border:1px solid #c8c8c8;border-radius:10px;background:#fff;overflow:hidden;"></div>
<div class="t" style="left:470.6px;width:600px;text-align:center;top:393.1px;font-size:12.3px;color:#222;font-weight:normal;letter-spacing:0.4px;">0%</div>
<div class="t" style="left:841.0px;top:390.1px;font-size:14.1px;color:#333;font-weight:normal;">No</div>
<div class="t" style="left:962.0px;top:390.1px;font-size:14.1px;color:#333;font-weight:normal;">No</div>
<div class="t" style="left:1070.0px;top:390.1px;font-size:14.1px;color:#333;font-weight:normal;">No</div>
<div class="t" style="left:1164.0px;top:390.1px;font-size:14.1px;color:#333;font-weight:normal;">000006</div>
<div class="t" style="left:1263.0px;top:390.1px;font-size:14.1px;color:#333;font-weight:normal;">09/07/2022</div>
<svg style="left:1405.4px;top:389.5px" width="14" height="14" viewBox="0 0 14 14"><circle cx="7" cy="7" r="6.1" fill="none" stroke="#e63a48" stroke-width="1.3"/><path d="M4.6 4.6 L9.4 9.4 M9.4 4.6 L4.6 9.4" stroke="#e63a48" stroke-width="1.5"/></svg>
<div class="r" style="left:203px;top:413px;width:1242px;height:31px;background:#ffffff;border-bottom:1px solid #dcdcdc;"></div>
<div class="r" style="left:320px;top:413px;width:1px;height:30px;background:#dcdcdc;"></div>
<div class="r" style="left:437px;top:413px;width:1px;height:30px;background:#dcdcdc;"></div>
<div class="r" style="left:575px;top:413px;width:1px;height:30px;background:#dcdcdc;"></div>
<div class="r" style="left:705px;top:413px;width:1px;height:30px;background:#dcdcdc;"></div>
<div class="r" style="left:837px;top:413px;width:1px;height:30px;background:#dcdcdc;"></div>
<div class="r" style="left:958px;top:413px;width:1px;height:30px;background:#dcdcdc;"></div>
<div class="r" style="left:1066px;top:413px;width:1px;height:30px;background:#dcdcdc;"></div>
<div class="r" style="left:1160px;top:413px;width:1px;height:30px;background:#dcdcdc;"></div>
<div class="r" style="left:1259px;top:413px;width:1px;height:30px;background:#dcdcdc;"></div>
<div class="r" style="left:1388px;top:413px;width:1px;height:30px;background:#dcdcdc;"></div>
<div class="t" style="left:207.0px;top:422.1px;font-size:14.1px;color:#333;font-weight:normal;">Hester</div>
<div class="t" style="left:324.0px;top:422.1px;font-size:14.1px;color:#333;font-weight:normal;">Tim</div>
<div class="t" style="left:441.0px;top:422.1px;font-size:14.1px;color:#333;font-weight:normal;">HesteT</div>
<div class="t" style="left:579.0px;top:422.1px;font-size:14.1px;color:#333;font-weight:normal;">09/17/2022</div>
<div class="r" style="left:712px;top:416px;width:119px;height:24px;border:1px solid #c8c8c8;border-radius:10px;background:#fff;overflow:hidden;"></div>
<div class="t" style="left:470.6px;width:600px;text-align:center;top:425.1px;font-size:12.3px;color:#222;font-weight:normal;letter-spacing:0.4px;">0%</div>
<div class="t" style="left:841.0px;top:422.1px;font-size:14.1px;color:#333;font-weight:normal;">No</div>
<div class="t" style="left:962.0px;top:422.1px;font-size:14.1px;color:#333;font-weight:normal;">No</div>
<div class="t" style="left:1070.0px;top:422.1px;font-size:14.1px;color:#333;font-weight:normal;">No</div>
<div class="t" style="left:1164.0px;top:422.1px;font-size:14.1px;color:#333;font-weight:normal;">000002</div>
<div class="t" style="left:1263.0px;top:422.1px;font-size:14.1px;color:#333;font-weight:normal;">08/01/2022</div>
<svg style="left:1405.4px;top:421.5px" width="14" height="14" viewBox="0 0 14 14"><circle cx="7" cy="7" r="6.1" fill="none" stroke="#e63a48" stroke-width="1.3"/><path d="M4.6 4.6 L9.4 9.4 M9.4 4.6 L4.6 9.4" stroke="#e63a48" stroke-width="1.5"/></svg>
<div class="r" style="left:203px;top:444px;width:1242px;height:32px;background:#f2f2f2;border-bottom:1px solid #dcdcdc;"></div>
<div class="r" style="left:320px;top:444px;width:1px;height:31px;background:#dcdcdc;"></div>
<div class="r" style="left:437px;top:444px;width:1px;height:31px;background:#dcdcdc;"></div>
<div class="r" style="left:575px;top:444px;width:1px;height:31px;background:#dcdcdc;"></div>
<div class="r" style="left:705px;top:444px;width:1px;height:31px;background:#dcdcdc;"></div>
<div class="r" style="left:837px;top:444px;width:1px;height:31px;background:#dcdcdc;"></div>
<div class="r" style="left:958px;top:444px;width:1px;height:31px;background:#dcdcdc;"></div>
<div class="r" style="left:1066px;top:444px;width:1px;height:31px;background:#dcdcdc;"></div>
<div class="r" style="left:1160px;top:444px;width:1px;height:31px;background:#dcdcdc;"></div>
<div class="r" style="left:1259px;top:444px;width:1px;height:31px;background:#dcdcdc;"></div>
<div class="r" style="left:1388px;top:444px;width:1px;height:31px;background:#dcdcdc;"></div>
<div class="t" style="left:207.0px;top:453.1px;font-size:14.1px;color:#333;font-weight:normal;">Coursey</div>
<div class="t" style="left:324.0px;top:453.1px;font-size:14.1px;color:#333;font-weight:normal;">Susanna</div>
<div class="t" style="left:441.0px;top:453.1px;font-size:14.1px;color:#333;font-weight:normal;">28s</div>
<div class="t" style="left:579.0px;top:453.1px;font-size:14.1px;color:#333;font-weight:normal;">09/11/2022</div>
<div class="r" style="left:712px;top:447px;width:119px;height:24px;border:1px solid #c8c8c8;border-radius:10px;background:#fff;overflow:hidden;"></div>
<div class="t" style="left:470.6px;width:600px;text-align:center;top:456.1px;font-size:12.3px;color:#222;font-weight:normal;letter-spacing:0.4px;">0%</div>
<div class="t" style="left:841.0px;top:453.1px;font-size:14.1px;color:#333;font-weight:normal;">No</div>
<div class="t" style="left:962.0px;top:453.1px;font-size:14.1px;color:#333;font-weight:normal;">No</div>
<div class="t" style="left:1070.0px;top:453.1px;font-size:14.1px;color:#333;font-weight:normal;">No</div>
<div class="t" style="left:1164.0px;top:453.1px;font-size:14.1px;color:#333;font-weight:normal;">000003</div>
<div class="t" style="left:1263.0px;top:453.1px;font-size:14.1px;color:#333;font-weight:normal;">08/15/2022</div>
<svg style="left:1405.4px;top:452.5px" width="14" height="14" viewBox="0 0 14 14"><circle cx="7" cy="7" r="6.1" fill="none" stroke="#e63a48" stroke-width="1.3"/><path d="M4.6 4.6 L9.4 9.4 M9.4 4.6 L4.6 9.4" stroke="#e63a48" stroke-width="1.5"/></svg>
<div class="r" style="left:203px;top:476px;width:1242px;height:31px;background:#ffffff;border-bottom:1px solid #dcdcdc;"></div>
<div class="r" style="left:320px;top:476px;width:1px;height:30px;background:#dcdcdc;"></div>
<div class="r" style="left:437px;top:476px;width:1px;height:30px;background:#dcdcdc;"></div>
<div class="r" style="left:575px;top:476px;width:1px;height:30px;background:#dcdcdc;"></div>
<div class="r" style="left:705px;top:476px;width:1px;height:30px;background:#dcdcdc;"></div>
<div class="r" style="left:837px;top:476px;width:1px;height:30px;background:#dcdcdc;"></div>
<div class="r" style="left:958px;top:476px;width:1px;height:30px;background:#dcdcdc;"></div>
<div class="r" style="left:1066px;top:476px;width:1px;height:30px;background:#dcdcdc;"></div>
<div class="r" style="left:1160px;top:476px;width:1px;height:30px;background:#dcdcdc;"></div>
<div class="r" style="left:1259px;top:476px;width:1px;height:30px;background:#dcdcdc;"></div>
<div class="r" style="left:1388px;top:476px;width:1px;height:30px;background:#dcdcdc;"></div>
<div class="t" style="left:207.0px;top:485.1px;font-size:14.1px;color:#333;font-weight:normal;">Coursey</div>
<div class="t" style="left:324.0px;top:485.1px;font-size:14.1px;color:#333;font-weight:normal;">Susanna</div>
<div class="t" style="left:441.0px;top:485.1px;font-size:14.1px;color:#333;font-weight:normal;">b2b</div>
<div class="t" style="left:579.0px;top:485.1px;font-size:14.1px;color:#333;font-weight:normal;">08/27/2022</div>
<div class="r" style="left:712px;top:479px;width:119px;height:24px;border:1px solid #c8c8c8;border-radius:10px;background:#fff;overflow:hidden;"></div>
<div class="t" style="left:470.6px;width:600px;text-align:center;top:488.1px;font-size:12.3px;color:#222;font-weight:normal;letter-spacing:0.4px;">0%</div>
<div class="t" style="left:841.0px;top:485.1px;font-size:14.1px;color:#333;font-weight:normal;">No</div>
<div class="t" style="left:962.0px;top:485.1px;font-size:14.1px;color:#333;font-weight:normal;">No</div>
<div class="t" style="left:1070.0px;top:485.1px;font-size:14.1px;color:#333;font-weight:normal;">No</div>
<div class="t" style="left:1164.0px;top:485.1px;font-size:14.1px;color:#333;font-weight:normal;">000002</div>
<div class="t" style="left:1263.0px;top:485.1px;font-size:14.1px;color:#333;font-weight:normal;">07/28/2022</div>
<svg style="left:1405.4px;top:484.5px" width="14" height="14" viewBox="0 0 14 14"><circle cx="7" cy="7" r="6.1" fill="none" stroke="#e63a48" stroke-width="1.3"/><path d="M4.6 4.6 L9.4 9.4 M9.4 4.6 L4.6 9.4" stroke="#e63a48" stroke-width="1.5"/></svg>
<div class="r" style="left:203px;top:507px;width:1242px;height:32px;background:#f2f2f2;border-bottom:1px solid #dcdcdc;"></div>
<div class="r" style="left:320px;top:507px;width:1px;height:31px;background:#dcdcdc;"></div>
<div class="r" style="left:437px;top:507px;width:1px;height:31px;background:#dcdcdc;"></div>
<div class="r" style="left:575px;top:507px;width:1px;height:31px;background:#dcdcdc;"></div>
<div class="r" style="left:705px;top:507px;width:1px;height:31px;background:#dcdcdc;"></div>
<div class="r" style="left:837px;top:507px;width:1px;height:31px;background:#dcdcdc;"></div>
<div class="r" style="left:958px;top:507px;width:1px;height:31px;background:#dcdcdc;"></div>
<div class="r" style="left:1066px;top:507px;width:1px;height:31px;background:#dcdcdc;"></div>
<div class="r" style="left:1160px;top:507px;width:1px;height:31px;background:#dcdcdc;"></div>
<div class="r" style="left:1259px;top:507px;width:1px;height:31px;background:#dcdcdc;"></div>
<div class="r" style="left:1388px;top:507px;width:1px;height:31px;background:#dcdcdc;"></div>
<div class="t" style="left:207.0px;top:516.1px;font-size:14.1px;color:#333;font-weight:normal;">Coursey</div>
<div class="t" style="left:324.0px;top:516.1px;font-size:14.1px;color:#333;font-weight:normal;">Susanna</div>
<div class="t" style="left:441.0px;top:516.1px;font-size:14.1px;color:#333;font-weight:normal;">CouS</div>
<div class="t" style="left:579.0px;top:516.1px;font-size:14.1px;color:#333;font-weight:normal;">08/18/2022</div>
<div class="r" style="left:712px;top:510px;width:119px;height:24px;border:1px solid #c8c8c8;border-radius:10px;background:#fff;overflow:hidden;"></div>
<div class="t" style="left:470.6px;width:600px;text-align:center;top:519.1px;font-size:12.3px;color:#222;font-weight:normal;letter-spacing:0.4px;">0%</div>
<div class="t" style="left:841.0px;top:516.1px;font-size:14.1px;color:#333;font-weight:normal;">No</div>
<div class="t" style="left:962.0px;top:516.1px;font-size:14.1px;color:#333;font-weight:normal;">No</div>
<div class="t" style="left:1070.0px;top:516.1px;font-size:14.1px;color:#333;font-weight:normal;">No</div>
<div class="t" style="left:1164.0px;top:516.1px;font-size:14.1px;color:#333;font-weight:normal;">000001</div>
<div class="t" style="left:1263.0px;top:516.1px;font-size:14.1px;color:#333;font-weight:normal;">07/25/2022</div>
<svg style="left:1405.4px;top:515.5px" width="14" height="14" viewBox="0 0 14 14"><circle cx="7" cy="7" r="6.1" fill="none" stroke="#e63a48" stroke-width="1.3"/><path d="M4.6 4.6 L9.4 9.4 M9.4 4.6 L4.6 9.4" stroke="#e63a48" stroke-width="1.5"/></svg>
<div class="r" style="left:203px;top:539px;width:1242px;height:31px;background:#ffffff;border-bottom:1px solid #dcdcdc;"></div>
<div class="r" style="left:320px;top:539px;width:1px;height:30px;background:#dcdcdc;"></div>
<div class="r" style="left:437px;top:539px;width:1px;height:30px;background:#dcdcdc;"></div>
<div class="r" style="left:575px;top:539px;width:1px;height:30px;background:#dcdcdc;"></div>
<div class="r" style="left:705px;top:539px;width:1px;height:30px;background:#dcdcdc;"></div>
<div class="r" style="left:837px;top:539px;width:1px;height:30px;background:#dcdcdc;"></div>
<div class="r" style="left:958px;top:539px;width:1px;height:30px;background:#dcdcdc;"></div>
<div class="r" style="left:1066px;top:539px;width:1px;height:30px;background:#dcdcdc;"></div>
<div class="r" style="left:1160px;top:539px;width:1px;height:30px;background:#dcdcdc;"></div>
<div class="r" style="left:1259px;top:539px;width:1px;height:30px;background:#dcdcdc;"></div>
<div class="r" style="left:1388px;top:539px;width:1px;height:30px;background:#dcdcdc;"></div>
<div class="t" style="left:207.0px;top:548.1px;font-size:14.1px;color:#333;font-weight:normal;">testy</div>
<div class="t" style="left:324.0px;top:548.1px;font-size:14.1px;color:#333;font-weight:normal;">tester</div>
<div class="t" style="left:441.0px;top:548.1px;font-size:14.1px;color:#333;font-weight:normal;">ttesty</div>
<div class="t" style="left:579.0px;top:548.1px;font-size:14.1px;color:#333;font-weight:normal;">07/02/2022</div>
<div class="r" style="left:712px;top:542px;width:119px;height:24px;border:1px solid #c8c8c8;border-radius:10px;background:#fff;overflow:hidden;"><div class="r" style="left:0;top:0;width:13.0px;height:100%;background:#2f5070;"></div></div>
<div class="t" style="left:470.6px;width:600px;text-align:center;top:551.1px;font-size:12.3px;color:#222;font-weight:normal;letter-spacing:0.4px;">11%</div>
<div class="t" style="left:841.0px;top:548.1px;font-size:14.1px;color:#333;font-weight:normal;">No</div>
<div class="t" style="left:962.0px;top:548.1px;font-size:14.1px;color:#333;font-weight:normal;">No</div>
<div class="t" style="left:1070.0px;top:548.1px;font-size:14.1px;color:#333;font-weight:normal;">No</div>
<div class="t" style="left:1164.0px;top:548.1px;font-size:14.1px;color:#333;font-weight:normal;">000002</div>
<div class="t" style="left:1263.0px;top:548.1px;font-size:14.1px;color:#333;font-weight:normal;">06/02/2022</div>
<svg style="left:1405.4px;top:547.5px" width="14" height="14" viewBox="0 0 14 14"><circle cx="7" cy="7" r="6.1" fill="none" stroke="#e63a48" stroke-width="1.3"/><path d="M4.6 4.6 L9.4 9.4 M9.4 4.6 L4.6 9.4" stroke="#e63a48" stroke-width="1.5"/></svg>
<div class="r" style="left:203px;top:570px;width:1242px;height:31px;background:#f2f2f2;border-bottom:1px solid #dcdcdc;"></div>
<div class="r" style="left:320px;top:570px;width:1px;height:30px;background:#dcdcdc;"></div>
<div class="r" style="left:437px;top:570px;width:1px;height:30px;background:#dcdcdc;"></div>
<div class="r" style="left:575px;top:570px;width:1px;height:30px;background:#dcdcdc;"></div>
<div class="r" style="left:705px;top:570px;width:1px;height:30px;background:#dcdcdc;"></div>
<div class="r" style="left:837px;top:570px;width:1px;height:30px;background:#dcdcdc;"></div>
<div class="r" style="left:958px;top:570px;width:1px;height:30px;background:#dcdcdc;"></div>
<div class="r" style="left:1066px;top:570px;width:1px;height:30px;background:#dcdcdc;"></div>
<div class="r" style="left:1160px;top:570px;width:1px;height:30px;background:#dcdcdc;"></div>
<div class="r" style="left:1259px;top:570px;width:1px;height:30px;background:#dcdcdc;"></div>
<div class="r" style="left:1388px;top:570px;width:1px;height:30px;background:#dcdcdc;"></div>
<div class="t" style="left:207.0px;top:579.1px;font-size:14.1px;color:#333;font-weight:normal;">Adams</div>
<div class="t" style="left:324.0px;top:579.1px;font-size:14.1px;color:#333;font-weight:normal;">Chelsea</div>
<div class="t" style="left:441.0px;top:579.1px;font-size:14.1px;color:#333;font-weight:normal;">cadams</div>
<div class="t" style="left:579.0px;top:579.1px;font-size:14.1px;color:#333;font-weight:normal;">06/25/2022</div>
<div class="r" style="left:712px;top:573px;width:119px;height:24px;border:1px solid #c8c8c8;border-radius:10px;background:#fff;overflow:hidden;"></div>
<div class="t" style="left:470.6px;width:600px;text-align:center;top:582.1px;font-size:12.3px;color:#222;font-weight:normal;letter-spacing:0.4px;">0%</div>
<div class="t" style="left:841.0px;top:579.1px;font-size:14.1px;color:#333;font-weight:normal;">No</div>
<div class="t" style="left:962.0px;top:579.1px;font-size:14.1px;color:#333;font-weight:normal;">No</div>
<div class="t" style="left:1070.0px;top:579.1px;font-size:14.1px;color:#333;font-weight:normal;">No</div>
<div class="t" style="left:1164.0px;top:579.1px;font-size:14.1px;color:#333;font-weight:normal;">000002</div>
<div class="t" style="left:1263.0px;top:579.1px;font-size:14.1px;color:#333;font-weight:normal;">05/26/2022</div>
<svg style="left:1405.4px;top:578.5px" width="14" height="14" viewBox="0 0 14 14"><circle cx="7" cy="7" r="6.1" fill="none" stroke="#e63a48" stroke-width="1.3"/><path d="M4.6 4.6 L9.4 9.4 M9.4 4.6 L4.6 9.4" stroke="#e63a48" stroke-width="1.5"/></svg>
<div class="r" style="left:203px;top:601px;width:1242px;height:32px;background:#ffffff;border-bottom:1px solid #dcdcdc;"></div>
<div class="r" style="left:320px;top:601px;width:1px;height:31px;background:#dcdcdc;"></div>
<div class="r" style="left:437px;top:601px;width:1px;height:31px;background:#dcdcdc;"></div>
<div class="r" style="left:575px;top:601px;width:1px;height:31px;background:#dcdcdc;"></div>
<div class="r" style="left:705px;top:601px;width:1px;height:31px;background:#dcdcdc;"></div>
<div class="r" style="left:837px;top:601px;width:1px;height:31px;background:#dcdcdc;"></div>
<div class="r" style="left:958px;top:601px;width:1px;height:31px;background:#dcdcdc;"></div>
<div class="r" style="left:1066px;top:601px;width:1px;height:31px;background:#dcdcdc;"></div>
<div class="r" style="left:1160px;top:601px;width:1px;height:31px;background:#dcdcdc;"></div>
<div class="r" style="left:1259px;top:601px;width:1px;height:31px;background:#dcdcdc;"></div>
<div class="r" style="left:1388px;top:601px;width:1px;height:31px;background:#dcdcdc;"></div>
<div class="t" style="left:207.0px;top:610.1px;font-size:14.1px;color:#333;font-weight:normal;">Aldrich</div>
<div class="t" style="left:324.0px;top:610.1px;font-size:14.1px;color:#333;font-weight:normal;">Joshua</div>
<div class="t" style="left:441.0px;top:610.1px;font-size:14.1px;color:#333;font-weight:normal;">jaldrich</div>
<div class="t" style="left:579.0px;top:610.1px;font-size:14.1px;color:#333;font-weight:normal;">06/25/2022</div>
<div class="r" style="left:712px;top:604px;width:119px;height:24px;border:1px solid #c8c8c8;border-radius:10px;background:#fff;overflow:hidden;"><div class="r" style="left:0;top:0;width:59.0px;height:100%;background:#9b2525;"></div></div>
<div class="t" style="left:470.6px;width:600px;text-align:center;top:613.1px;font-size:12.3px;color:#222;font-weight:normal;letter-spacing:0.4px;">50%</div>
<div class="t" style="left:841.0px;top:610.1px;font-size:14.1px;color:#333;font-weight:normal;">No</div>
<div class="t" style="left:962.0px;top:610.1px;font-size:14.1px;color:#333;font-weight:normal;">No</div>
<div class="t" style="left:1070.0px;top:610.1px;font-size:14.1px;color:#333;font-weight:normal;">No</div>
<div class="t" style="left:1164.0px;top:610.1px;font-size:14.1px;color:#333;font-weight:normal;">000001</div>
<div class="t" style="left:1263.0px;top:610.1px;font-size:14.1px;color:#333;font-weight:normal;">05/23/2022</div>
<svg style="left:1405.4px;top:609.5px" width="14" height="14" viewBox="0 0 14 14"><circle cx="7" cy="7" r="6.1" fill="none" stroke="#e63a48" stroke-width="1.3"/><path d="M4.6 4.6 L9.4 9.4 M9.4 4.6 L4.6 9.4" stroke="#e63a48" stroke-width="1.5"/></svg>
<div class="r" style="left:203px;top:633px;width:1242px;height:31px;background:#f2f2f2;border-bottom:1px solid #dcdcdc;"></div>
<div class="r" style="left:320px;top:633px;width:1px;height:30px;background:#dcdcdc;"></div>
<div class="r" style="left:437px;top:633px;width:1px;height:30px;background:#dcdcdc;"></div>
<div class="r" style="left:575px;top:633px;width:1px;height:30px;background:#dcdcdc;"></div>
<div class="r" style="left:705px;top:633px;width:1px;height:30px;background:#dcdcdc;"></div>
<div class="r" style="left:837px;top:633px;width:1px;height:30px;background:#dcdcdc;"></div>
<div class="r" style="left:958px;top:633px;width:1px;height:30px;background:#dcdcdc;"></div>
<div class="r" style="left:1066px;top:633px;width:1px;height:30px;background:#dcdcdc;"></div>
<div class="r" style="left:1160px;top:633px;width:1px;height:30px;background:#dcdcdc;"></div>
<div class="r" style="left:1259px;top:633px;width:1px;height:30px;background:#dcdcdc;"></div>
<div class="r" style="left:1388px;top:633px;width:1px;height:30px;background:#dcdcdc;"></div>
<div class="t" style="left:207.0px;top:642.1px;font-size:14.1px;color:#333;font-weight:normal;">Hester</div>
<div class="t" style="left:324.0px;top:642.1px;font-size:14.1px;color:#333;font-weight:normal;">Tim</div>
<div class="t" style="left:441.0px;top:642.1px;font-size:14.1px;color:#333;font-weight:normal;">HestT</div>
<div class="t" style="left:579.0px;top:642.1px;font-size:14.1px;color:#333;font-weight:normal;">06/16/2022</div>
<div class="r" style="left:712px;top:636px;width:119px;height:24px;border:1px solid #c8c8c8;border-radius:10px;background:#fff;overflow:hidden;"></div>
<div class="t" style="left:470.6px;width:600px;text-align:center;top:645.1px;font-size:12.3px;color:#222;font-weight:normal;letter-spacing:0.4px;">0%</div>
<div class="t" style="left:841.0px;top:642.1px;font-size:14.1px;color:#333;font-weight:normal;">No</div>
<div class="t" style="left:962.0px;top:642.1px;font-size:14.1px;color:#333;font-weight:normal;">No</div>
<div class="t" style="left:1070.0px;top:642.1px;font-size:14.1px;color:#333;font-weight:normal;">No</div>
<div class="t" style="left:1164.0px;top:642.1px;font-size:14.1px;color:#333;font-weight:normal;">000002</div>
<div class="t" style="left:1263.0px;top:642.1px;font-size:14.1px;color:#333;font-weight:normal;">05/16/2022</div>
<svg style="left:1405.4px;top:641.5px" width="14" height="14" viewBox="0 0 14 14"><circle cx="7" cy="7" r="6.1" fill="none" stroke="#e63a48" stroke-width="1.3"/><path d="M4.6 4.6 L9.4 9.4 M9.4 4.6 L4.6 9.4" stroke="#e63a48" stroke-width="1.5"/></svg>
<div class="r" style="left:202px;top:663px;width:1243px;height:295px;background:#fff;"></div>
<div class="t" style="left:216.0px;top:677.8px;font-size:11.2px;color:#3a3a3a;font-weight:normal;">Per Page</div>
<div class="r" style="left:262px;top:670px;width:45px;height:25px;border:1px solid #c8c8c8;border-radius:4px;background:#fff;"></div>
<div class="t" style="left:270.5px;top:676.4px;font-size:12.8px;color:#222;font-weight:normal;">10</div>
<svg style="left:292px;top:679px" width="10" height="7" viewBox="0 0 10 7"><path d="M1 1.2 L5 5.2 L9 1.2" fill="none" stroke="#222" stroke-width="1.9"/></svg>
<svg style="left:1165px;top:676px" width="275" height="16" viewBox="1165 676 275 16"><g fill="none" stroke="#333" stroke-width="2.7" stroke-linecap="butt" stroke-linejoin="miter"><path d="M1172.5 679.5 L1168.8 683.5 L1172.5 687.5 M1178.8 679.5 L1175.1 683.5 L1178.8 687.5 M1191 679.5 L1187.3 683.5 L1191 687.5 M1413.2 679.5 L1416.9 683.5 L1413.2 687.5 M1426.5 679.5 L1430.2 683.5 L1426.5 687.5 M1432.8 679.5 L1436.5 683.5 L1432.8 687.5"/></g></svg>
<div class="t" style="left:1201.5px;top:674.8px;font-size:16.8px;color:#2a2a2a;font-weight:bold">1</div>
<div class="t" style="left:1223.2px;top:676.3px;font-size:14.9px;color:#333;font-weight:normal">2</div>
<div class="t" style="left:1245.0px;top:676.3px;font-size:14.9px;color:#333;font-weight:normal">3</div>
<div class="t" style="left:1266.5px;top:676.3px;font-size:14.9px;color:#333;font-weight:normal">4</div>
<div class="t" style="left:1288.6px;top:676.3px;font-size:14.9px;color:#333;font-weight:normal">5</div>
<div class="t" style="left:1325.2px;top:676.3px;font-size:14.9px;color:#333;font-weight:normal">33</div>
<div class="t" style="left:1355.2px;top:676.3px;font-size:14.9px;color:#333;font-weight:normal">34</div>
<div class="t" style="left:1385.9px;top:676.3px;font-size:14.9px;color:#333;font-weight:normal">35</div>
<svg style="left:1306px;top:681px" width="11" height="3" viewBox="0 0 11 3"><circle cx="1.3" cy="1.3" r="1.1" fill="#333"/><circle cx="5.3" cy="1.3" r="1.1" fill="#333"/><circle cx="9.3" cy="1.3" r="1.1" fill="#333"/></svg>
<div class="t" style="left:211.0px;top:726.1px;font-size:15.5px;color:#1c3a5a;font-weight:bold;">User Details</div>
<div class="r" style="left:208px;top:747px;width:1237px;height:2px;background:#1b3a5a;"></div>
<div class="r" style="left:211px;top:759px;width:291px;height:73px;background:#f3f3f3;border-radius:4px;"></div>
<div class="t" style="left:216.6px;top:768.2px;font-size:13.05px;color:#454545;font-weight:bold;">Portal Name</div>
<div class="r" style="left:218px;top:788px;width:271px;height:31px;background:#fff;border:1px solid #c6c6c6;border-radius:4px;"></div>
<div class="t" style="left:228.0px;top:797.2px;font-size:13.3px;color:#111;font-weight:normal;">Alliance Demo</div>
<div class="r" style="left:508px;top:759px;width:312px;height:73px;background:#f3f3f3;border-radius:4px;"></div>
<div class="t" style="left:513.6px;top:768.2px;font-size:13.05px;color:#454545;font-weight:bold;">First Name</div>
<div class="r" style="left:515px;top:788px;width:287px;height:31px;background:#fff;border:1px solid #c6c6c6;border-radius:4px;"></div>
<div class="t" style="left:521.1px;top:797.2px;font-size:13.3px;color:#111;font-weight:normal;">Michael</div>
<div class="r" style="left:826px;top:759px;width:291px;height:73px;background:#f3f3f3;border-radius:4px;"></div>
<div class="t" style="left:831.6px;top:768.2px;font-size:13.05px;color:#454545;font-weight:bold;">Last Name</div>
<div class="r" style="left:832px;top:788px;width:267px;height:31px;background:#fff;border:1px solid #c6c6c6;border-radius:4px;"></div>
<div class="t" style="left:838.5px;top:797.2px;font-size:13.3px;color:#111;font-weight:normal;">Beinenson</div>
<div class="r" style="left:1124px;top:759px;width:312px;height:73px;background:#f3f3f3;border-radius:4px;"></div>
<div class="t" style="left:1129.6px;top:768.2px;font-size:13.05px;color:#454545;font-weight:bold;">Email Address</div>
<div class="r" style="left:1130px;top:788px;width:287px;height:31px;background:#fff;border:1px solid #c6c6c6;border-radius:4px;"></div>
<div class="t" style="left:1136.8px;top:797.2px;font-size:13.3px;color:#111;font-weight:normal;">michael@learnwotc.com</div>
<div class="r" style="left:211px;top:839px;width:291px;height:73px;background:#f3f3f3;border-radius:4px;"></div>
<div class="t" style="left:216.6px;top:848.2px;font-size:13.05px;color:#454545;font-weight:bold;">SSN</div>
<div class="r" style="left:218px;top:868px;width:266px;height:31px;background:#fff;border:1px solid #c6c6c6;border-radius:4px;"></div>
<div class="t" style="left:224.0px;top:877.2px;font-size:13.3px;color:#111;font-weight:normal;">123-66-0000</div>
<div class="r" style="left:508px;top:839px;width:312px;height:73px;background:#f3f3f3;border-radius:4px;"></div>
<div class="t" style="left:513.6px;top:848.2px;font-size:13.05px;color:#454545;font-weight:bold;">User Name</div>
<div class="r" style="left:515px;top:868px;width:287px;height:31px;background:#fff;border:1px solid #c6c6c6;border-radius:4px;"></div>
<div class="t" style="left:521.1px;top:877.2px;font-size:13.3px;color:#111;font-weight:normal;">mbeinenson</div>
<div class="r" style="left:826px;top:839px;width:291px;height:73px;background:#f3f3f3;border-radius:4px;"></div>
<div class="t" style="left:831.6px;top:848.2px;font-size:13.05px;color:#454545;font-weight:bold;">Initial Password</div>
<div class="r" style="left:832px;top:868px;width:267px;height:31px;background:#fff;border:1px solid #c6c6c6;border-radius:4px;"></div>
<div class="r" style="left:1124px;top:839px;width:312px;height:73px;background:#f3f3f3;border-radius:4px;"></div>
<div class="t" style="left:1129.6px;top:848.2px;font-size:13.05px;color:#454545;font-weight:bold;">Account Expiration Date</div>
<div class="r" style="left:1130px;top:868px;width:287px;height:31px;background:#fff;border:1px solid #c6c6c6;border-radius:4px;"></div>
<div class="t" style="left:1136.8px;top:877.2px;font-size:13.3px;color:#111;font-weight:normal;">10/09/2022</div>
<div class="r" style="left:211px;top:919px;width:291px;height:73px;background:#f3f3f3;border-radius:4px;"></div>
<div class="t" style="left:216.6px;top:928.2px;font-size:13.05px;color:#454545;font-weight:bold;">Date Last Emailed</div>
<div class="r" style="left:218px;top:948px;width:266px;height:31px;background:#fff;border:1px solid #c6c6c6;border-radius:4px;"></div>
<div class="r" style="left:508px;top:919px;width:312px;height:73px;background:#f3f3f3;border-radius:4px;"></div>
<div class="t" style="left:513.6px;top:928.2px;font-size:13.05px;color:#454545;font-weight:bold;"># of Times Emailed</div>
<div class="r" style="left:515px;top:948px;width:287px;height:31px;background:#fff;border:1px solid #c6c6c6;border-radius:4px;"></div>
<div class="r" style="left:826px;top:919px;width:291px;height:73px;background:#f3f3f3;border-radius:4px;"></div>
<div class="t" style="left:831.6px;top:928.2px;font-size:13.05px;color:#454545;font-weight:bold;">Submitted Date</div>
<div class="r" style="left:832px;top:948px;width:267px;height:31px;background:#fff;border:1px solid #c6c6c6;border-radius:4px;"></div>
<div class="r" style="left:1124px;top:919px;width:312px;height:73px;background:#f3f3f3;border-radius:4px;"></div>
<div class="t" style="left:1129.6px;top:928.2px;font-size:13.05px;color:#454545;font-weight:bold;">Internal ID</div>
<div class="r" style="left:1130px;top:948px;width:287px;height:31px;background:#fff;border:1px solid #c6c6c6;border-radius:4px;"></div>
<svg style="left:1090px;top:0px" width="1" height="1"></svg><svg style="left:1390px;top:868px" width="28" height="24" viewBox="1390 868 28 24">
<rect x="1396.6" y="876.4" width="13" height="12" fill="#fff" stroke="#1d1238" stroke-width="1.2"/>
<path d="M1396.6 879.6 H1409.6" stroke="#1d1238" stroke-width="1.2"/>
<path d="M1396.6 882.6 H1409.6 M1396.6 885.6 H1409.6 M1399.8 879.6 V888.4 M1403 879.6 V888.4 M1406.3 879.6 V888.4" stroke="#2a2050" stroke-width="0.8"/>
<circle cx="1408.2" cy="877.5" r="3.4" fill="#ecebb8" stroke="#1d1238" stroke-width="1.1"/>
<path d="M1408.6 875.6 L1407.9 878.3" stroke="#111" stroke-width="0.9"/>
</svg>
<svg style="left:473px;top:799px" width="12" height="8" viewBox="0 0 12 8"><path d="M1.7 1.6 L5.9 5.8 L10.1 1.6" fill="none" stroke="#111" stroke-width="2.1"/></svg>
<div class="r" style="left:0px;top:79px;width:1451px;height:4px;background:linear-gradient(#e7e9ec,#eceef1);"></div>
<div class="r" style="left:190px;top:83px;width:1261px;height:3px;background:linear-gradient(rgba(40,50,70,0.035),rgba(40,50,70,0));"></div>
</body></html>
